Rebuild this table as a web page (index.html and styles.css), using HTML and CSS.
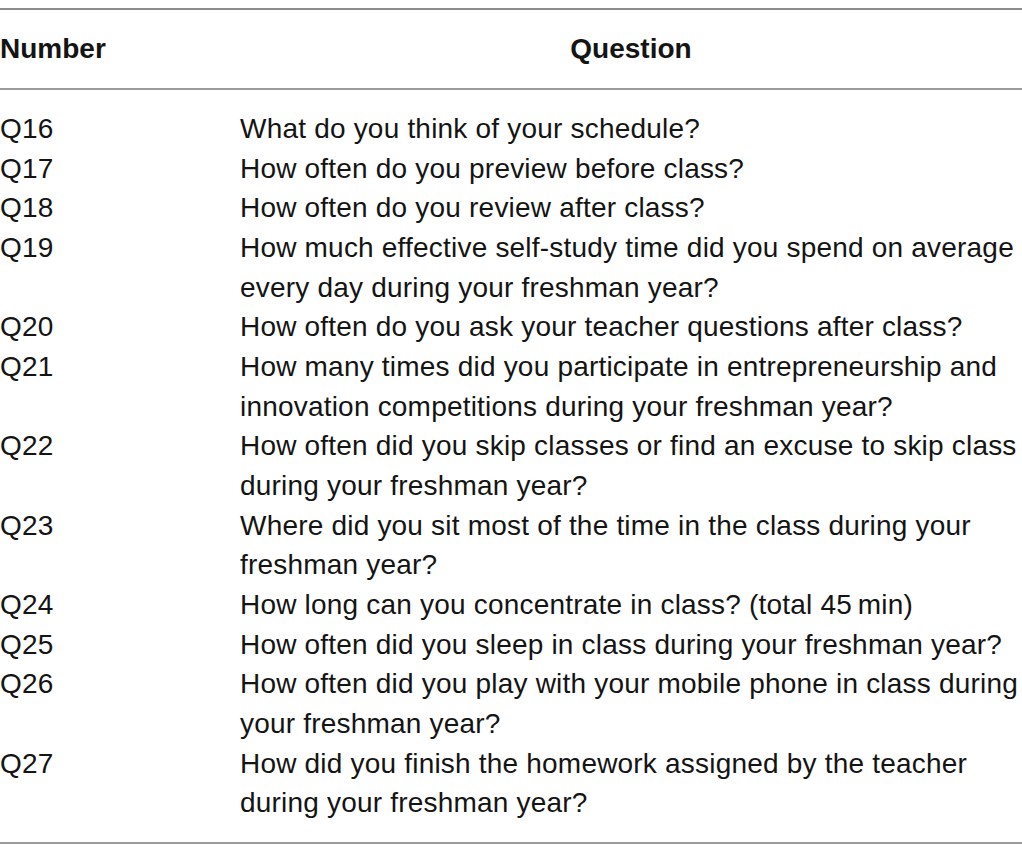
FILE: index.html
```html
<!DOCTYPE html>
<html lang="en">
<head>
<meta charset="utf-8">
<title>Questions</title>
<link rel="stylesheet" href="styles.css">
</head>
<body>
<table class="qtable">
  <thead>
    <tr><th class="num">Number</th><th class="q">Question</th></tr>
  </thead>
  <tbody>
    <tr class="first"><td class="num">Q16</td><td class="q">What do you think of your schedule?</td></tr>
    <tr><td class="num">Q17</td><td class="q">How often do you preview before class?</td></tr>
    <tr><td class="num">Q18</td><td class="q">How often do you review after class?</td></tr>
    <tr><td class="num">Q19</td><td class="q">How much effective self-study time did you spend on average<br>every day during your freshman year?</td></tr>
    <tr><td class="num">Q20</td><td class="q">How often do you ask your teacher questions after class?</td></tr>
    <tr><td class="num">Q21</td><td class="q">How many times did you participate in entrepreneurship and<br>innovation competitions during your freshman year?</td></tr>
    <tr><td class="num">Q22</td><td class="q">How often did you skip classes or find an excuse to skip class<br>during your freshman year?</td></tr>
    <tr><td class="num">Q23</td><td class="q">Where did you sit most of the time in the class during your<br>freshman year?</td></tr>
    <tr><td class="num">Q24</td><td class="q">How long can you concentrate in class? (total 45&#8201;min)</td></tr>
    <tr><td class="num">Q25</td><td class="q">How often did you sleep in class during your freshman year?</td></tr>
    <tr><td class="num">Q26</td><td class="q">How often did you play with your mobile phone in class during<br>your freshman year?</td></tr>
    <tr class="last"><td class="num">Q27</td><td class="q">How did you finish the homework assigned by the teacher<br>during your freshman year?</td></tr>
  </tbody>
</table>
</body>
</html>
```
FILE: styles.css
```css
html, body {
  margin: 0;
  padding: 0;
  background: #ffffff;
}
body {
  padding-top: 8px;
  font-family: "Liberation Sans", Arial, sans-serif;
  color: #141414;
}
.qtable {
  width: 1022px;
  border-collapse: collapse;
  border-top: 2px solid #8c8c8c;
  border-bottom: 2px solid #9a9a9a;
  font-size: 28px;
  letter-spacing: 0.2px;
  line-height: 39.67px;
}
.qtable th, .qtable td {
  padding: 0;
  vertical-align: top;
  white-space: nowrap;
}
.qtable th {
  font-weight: bold;
  height: 78px;
  vertical-align: middle;
  border-bottom: 2px solid #9a9a9a;
  letter-spacing: 0;
}
.qtable th.num { text-align: left; }
.qtable th.q { text-align: center; }
.qtable .num { width: 240px; }
.qtable tr.first td { padding-top: 19px; }
.qtable tr.last td { padding-bottom: 19px; }
```
